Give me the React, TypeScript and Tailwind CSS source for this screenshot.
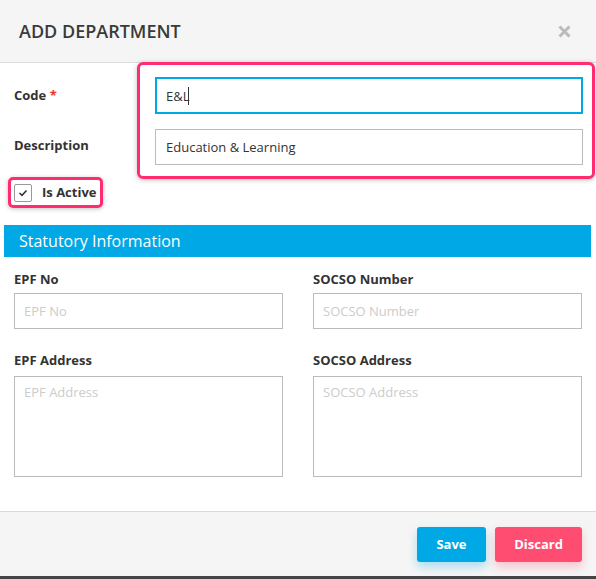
import { useState } from "react";

function Field({ label, placeholder, area }: { label: string; placeholder: string; area?: boolean }) {
  return (
    <div className="flex flex-col">
      <label className={`text-[13px] font-bold leading-[18px] text-[#333] ${area ? "mb-[7px]" : "mb-[5px]"}`}>{label}</label>
      {area ? (
        <textarea
          placeholder={placeholder}
          className="h-[101px] w-full resize-none border border-[#bbb] px-[9px] py-[6px] text-[13px] leading-[18px] text-[#333] placeholder:text-[#ccc] outline-none"
        />
      ) : (
        <input
          placeholder={placeholder}
          className="h-[36px] w-full border border-[#bbb] px-[9px] text-[13px] text-[#333] placeholder:text-[#ccc] outline-none"
        />
      )}
    </div>
  );
}

export default function App() {
  const [code, setCode] = useState("E&L");
  const [desc, setDesc] = useState("Education & Learning");
  const [active, setActive] = useState(true);

  return (
    <div className="w-[596px] h-[579px] bg-white flex flex-col font-['Open_Sans',sans-serif] overflow-hidden">
      {/* Header */}
      <div className="h-[63px] shrink-0 flex items-center justify-between bg-[#f5f5f5] border-b border-[#ddd] pl-[19px] pr-[25px]">
        <h2 className="text-[18px] text-[#3a3a3a] font-semibold">ADD DEPARTMENT</h2>
        <button className="text-[#bbb]">
          <svg width="13" height="13" viewBox="0 0 13 13">
            <path d="M1.5 1.5 L11.5 11.5 M11.5 1.5 L1.5 11.5" stroke="currentColor" strokeWidth="3" strokeLinecap="butt" />
          </svg>
        </button>
      </div>

      {/* Body */}
      <div className="flex-1 flex flex-col">
        <div className="flex -mt-px">
          <div className="w-[137px] shrink-0 pl-[14px] flex flex-col pt-[24px] gap-[32px]">
            <span className="text-[13px] font-bold leading-[18px] text-[#333]">
              Code <span className="text-[#e32]">*</span>
            </span>
            <span className="text-[13px] font-bold leading-[18px] text-[#333]">Description</span>
          </div>
          <div className="flex-1 mr-px border-[3px] border-[#ff2d6f] rounded-[6px] shadow-[0_1px_5px_rgba(0,0,0,0.25)] pl-[15px] pr-[9px] pt-[12px] pb-[11px] flex flex-col gap-[15px]">
            <div className="relative">
              <input
                value={code}
                onChange={(e) => setCode(e.target.value)}
                className="h-[37px] w-full border-2 border-[#00a8e5] px-[9px] text-[13px] text-[#333] outline-none"
              />
              <span className="absolute left-[33px] top-[10px] w-px h-[18px] bg-[#333]" />
            </div>
            <input
              value={desc}
              onChange={(e) => setDesc(e.target.value)}
              className="h-[36px] w-full border border-[#bbb] px-[10px] text-[13px] text-[#333] outline-none"
            />
          </div>
        </div>

        <div className="pl-[8px] -mt-[2px]">
          <label className="inline-flex items-center gap-[10px] h-[31px] border-[3px] border-[#ff2d6f] rounded-[5px] shadow-[0_1px_4px_rgba(0,0,0,0.25)] pl-[3px] pr-[4px] cursor-pointer">
            <span
              onClick={() => setActive(!active)}
              className="w-[18px] h-[18px] border border-[#999] rounded-[2px] flex items-center justify-center bg-white"
            >
              {active && (
                <svg width="10" height="8" viewBox="0 0 10 8">
                  <path d="M1.5 4 L4 6.3 L8.5 1.5" fill="none" stroke="#333" strokeWidth="1.6" />
                </svg>
              )}
            </span>
            <span className="text-[13px] font-bold text-[#333]">Is Active</span>
          </label>
        </div>

        {/* Statutory section */}
        <div className="mt-[17px] ml-[4px] mr-[5px] h-[32px] bg-[#00a8e5] flex items-center px-[15px]">
          <span className="text-[16px] text-white">Statutory Information</span>
        </div>

        <div className="px-[14px] pt-[13px] grid grid-cols-2 gap-x-[30px] gap-y-[22px]">
          <Field label="EPF No" placeholder="EPF No" />
          <Field label="SOCSO Number" placeholder="SOCSO Number" />
          <Field label="EPF Address" placeholder="EPF Address" area />
          <Field label="SOCSO Address" placeholder="SOCSO Address" area />
        </div>
      </div>

      {/* Footer */}
      <div className="h-[65px] shrink-0 bg-[#f5f5f5] border-t border-[#d9d9d9] flex items-center justify-end gap-[9px] pr-[14px] pt-[1px]">
        <button className="w-[69px] h-[35px] rounded-[3px] bg-[#00a8e5] text-white text-[13px] font-bold shadow-[0_5px_10px_rgba(0,168,229,0.3)]">
          Save
        </button>
        <button className="w-[87px] h-[35px] rounded-[3px] bg-[#ff4d71] text-white text-[13px] font-bold shadow-[0_5px_10px_rgba(255,77,113,0.3)]">
          Discard
        </button>
      </div>
      <div className="h-[3px] shrink-0 bg-[#444]" />
    </div>
  );
}
